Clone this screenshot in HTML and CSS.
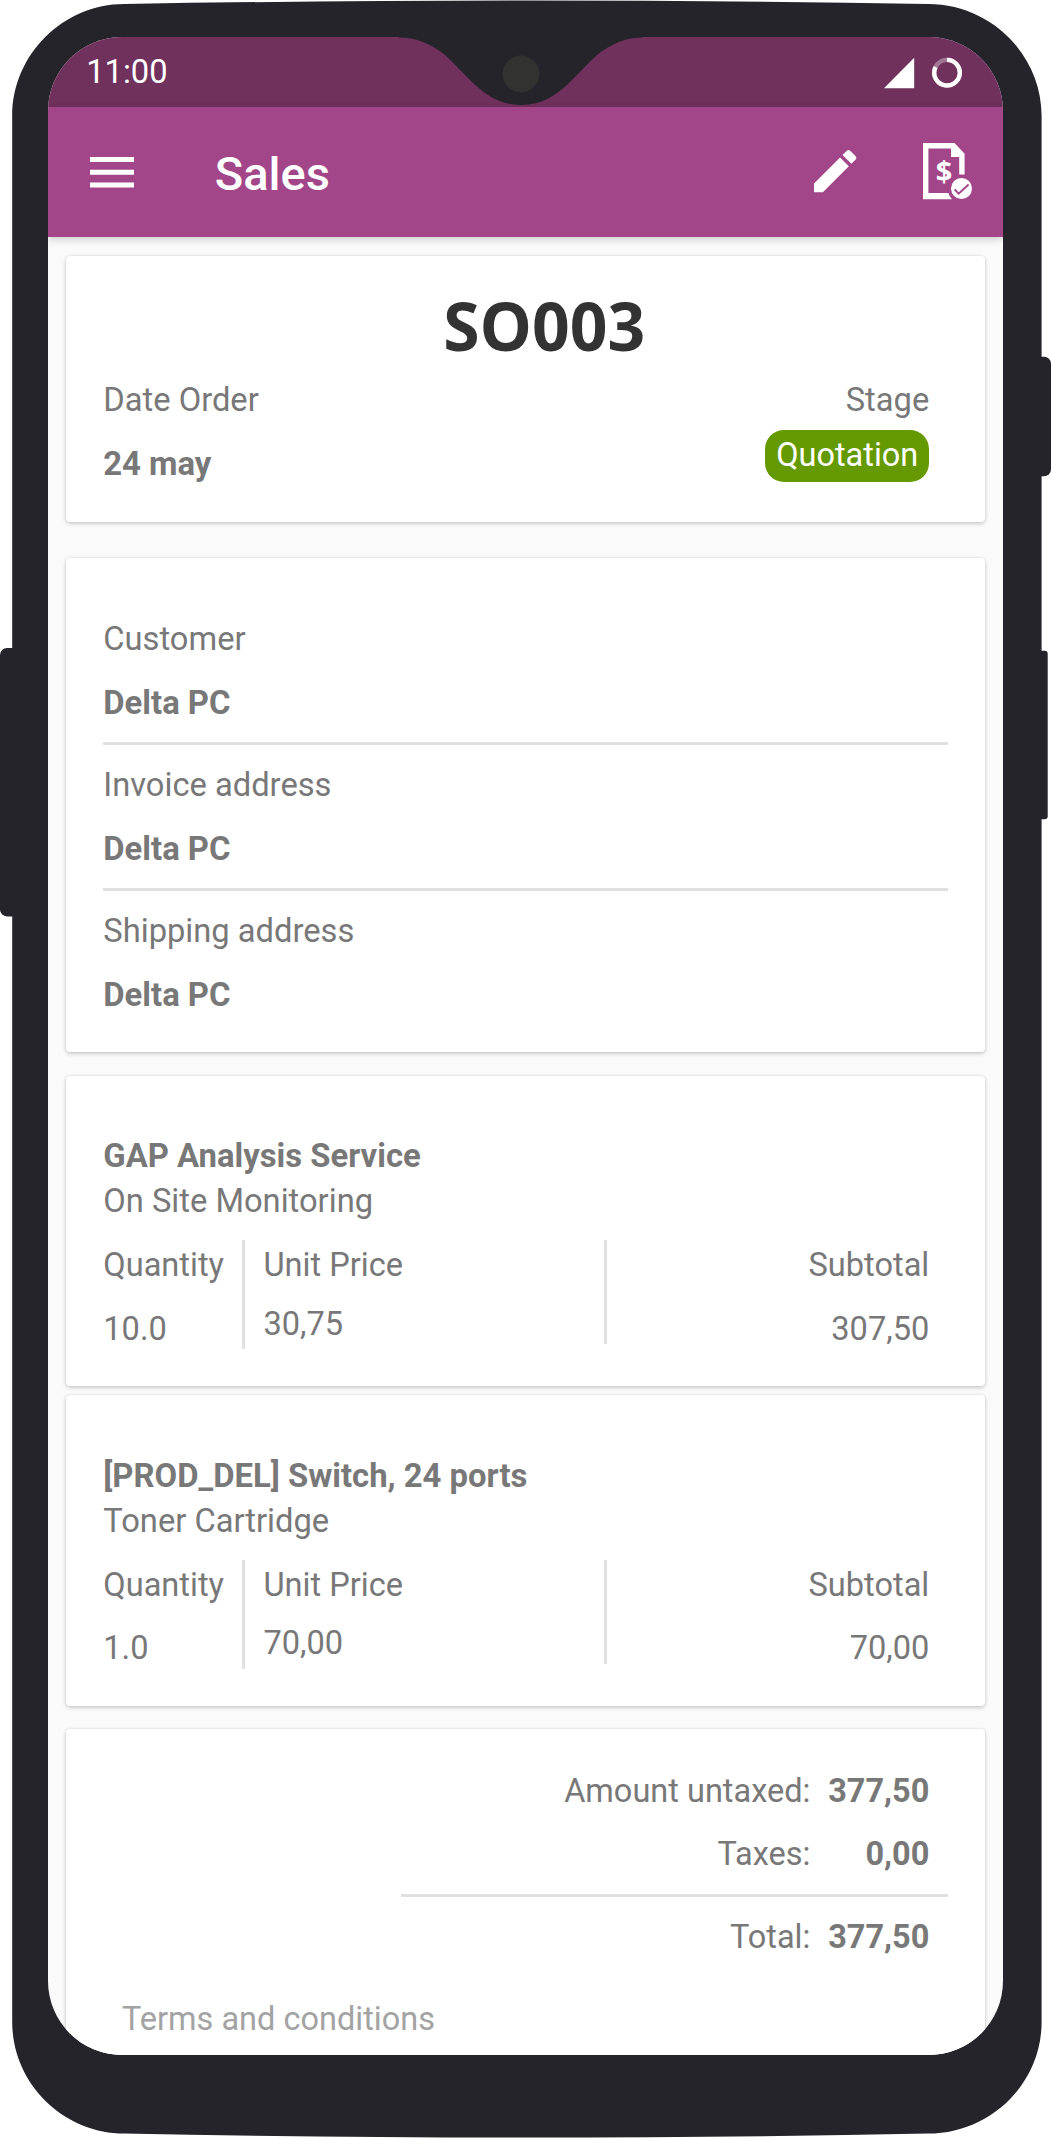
FILE: index.html
```html
<!DOCTYPE html>
<html lang="en">
<head>
<meta charset="utf-8">
<title>Sales</title>
<link rel="stylesheet" href="styles.css">
</head>
<body>
<div class="phone">
  <svg class="phone-shell" viewBox="0 0 1051 2138" aria-hidden="true">
    <rect x="0" y="648" width="30" height="268.4" rx="7"/>
    <rect x="1020" y="356.7" width="31" height="119.6" rx="7"/>
    <rect x="1020" y="650.7" width="27.7" height="168.6" rx="3"/>
    <path d="M12.2 116C12.2 54 64 4 124 4Q320 .6 527 .6Q734 .6 928 4C990 4 1041.6 54 1041.6 116V2022C1041.6 2084 990 2133.4 928 2133.6Q734 2137.6 527 2137.6Q320 2137.6 124 2133.6C64 2133.4 12.2 2084 12.2 2022Z"/>
  </svg>

  <div class="screen">
    <div class="status-bar">
      <span class="clock">11:00</span>
      <svg class="status-icons" viewBox="0 0 80 32" aria-hidden="true">
        <path d="M0 31.2L30.2 .7V31.2Z" fill="#fff"/>
        <circle cx="63" cy="15.7" r="12.8" fill="none" stroke="#fff" stroke-opacity=".35" stroke-width="4.4"/>
        <path d="M63 2.9A12.8 12.8 0 1 1 51.6 9.9" fill="none" stroke="#fff" stroke-width="4.4"/>
      </svg>
    </div>

    <header class="app-bar">
      <svg class="icon-menu" viewBox="0 0 44 31" aria-hidden="true">
        <path d="M0 0H44V5H0ZM0 12.8H44V17.8H0ZM0 25.5H44V30.5H0Z" fill="#fff"/>
      </svg>
      <h1 class="app-title">Sales</h1>
      <svg class="icon-edit" viewBox="0 0 24 24" aria-hidden="true">
        <path d="M3 17.25V21h3.75L17.81 9.94l-3.75-3.75L3 17.25zM20.71 7.04a1 1 0 0 0 0-1.41l-2.34-2.34a1 1 0 0 0-1.41 0l-1.83 1.83 3.75 3.75 1.83-1.83z" fill="#fff"/>
      </svg>
      <svg class="icon-invoice" viewBox="0 0 49 57" aria-hidden="true">
        <path d="M0 0H31.5L41.6 10.8V31.4H36.2V14H28V5.6H5.4V50H25.4Q26.3 53.6 29 56.2H0Z" fill="#fff"/>
        <text class="dollar" x="21" y="39" text-anchor="middle">$</text>
        <circle cx="38.5" cy="45.5" r="10.5" fill="#fff"/>
        <path d="M31.7 46.4L35.6 50.7L45.6 41.5" fill="none" stroke="#a24689" stroke-width="2"/>
      </svg>
    </header>

    <main class="content">
      <section class="card summary">
        <h2 class="order-name">SO003</h2>
        <div class="summary-row">
          <div class="stack">
            <span>Date Order</span>
            <strong>24 may</strong>
          </div>
          <div class="stage">
            <span>Stage</span>
            <span class="badge">Quotation</span>
          </div>
        </div>
      </section>

      <section class="card parties">
        <div class="stack field"><span>Customer</span><strong>Delta PC</strong></div>
        <div class="stack field"><span>Invoice address</span><strong>Delta PC</strong></div>
        <div class="stack field"><span>Shipping address</span><strong>Delta PC</strong></div>
      </section>

      <section class="card line">
        <strong>GAP Analysis Service</strong>
        <span>On Site Monitoring</span>
        <div class="figures">
          <div class="stack qty"><span>Quantity</span><span>10.0</span></div>
          <div class="stack price"><span>Unit Price</span><span>30,75</span></div>
          <div class="stack subtotal"><span>Subtotal</span><span>307,50</span></div>
        </div>
      </section>

      <section class="card line">
        <strong>[PROD_DEL] Switch, 24 ports</strong>
        <span>Toner Cartridge</span>
        <div class="figures">
          <div class="stack qty"><span>Quantity</span><span>1.0</span></div>
          <div class="stack price"><span>Unit Price</span><span>70,00</span></div>
          <div class="stack subtotal"><span>Subtotal</span><span>70,00</span></div>
        </div>
      </section>

      <section class="card totals">
        <div class="sums">
          <div class="sum"><span>Amount untaxed:</span><strong>377,50</strong></div>
          <div class="sum"><span>Taxes:</span><strong>0,00</strong></div>
          <div class="sum grand"><span>Total:</span><strong>377,50</strong></div>
        </div>
        <span class="terms">Terms and conditions</span>
      </section>
    </main>
  </div>

  <svg class="notch" viewBox="0 0 244 70" aria-hidden="true">
    <path d="M0 0V1.5C16 1.5 31 7 46 19C56 28 64 37 74 47C88 60 102 69 122 69C142 69 156 60 170 47C180 37 188 28 198 19C213 7 228 1.5 244 1.5V0Z" fill="#25242a"/>
    <circle cx="122" cy="38" r="18.4" fill="#323231"/>
  </svg>
</div>
</body>
</html>
```
FILE: styles.css
```css
* {
  box-sizing: border-box;
}

body {
  margin: 0;
  background: #fff;
  color: #787878;
  font: 400 32.7px/39px Roboto, "Liberation Sans", sans-serif;
}

strong {
  font-size: 32.84px;
}

.phone {
  position: relative;
  width: 1051px;
  height: 2138px;
  padding: 37px 47.7px 83.3px;
  overflow: hidden;
}

.phone-shell {
  position: absolute;
  inset: 0;
  width: 1051px;
  height: 2138px;
  fill: #25242a;
}

.screen {
  position: relative;
  width: 955.6px;
  height: 2017.7px;
  border-radius: 74px;
  background: #fafafa;
  overflow: hidden;
}

.notch {
  position: absolute;
  left: 398.5px;
  top: 35.5px;
  width: 244px;
  height: 70px;
}

.status-bar {
  display: flex;
  justify-content: space-between;
  align-items: flex-start;
  height: 70px;
  padding: 16px 39px 0 38.5px;
  background: #70315d;
  color: #fff;
}

.status-icons {
  width: 80px;
  height: 32px;
  margin-top: 3.5px;
}

.app-bar {
  position: relative;
  z-index: 1;
  display: flex;
  align-items: flex-start;
  height: 130.4px;
  padding: 0 31px 0 42px;
  background: #a24689;
  color: #fff;
  box-shadow: 0 2px 8px rgba(0, 0, 0, .2);
}

.icon-menu {
  width: 44px;
  height: 31px;
  margin-top: 49.6px;
}

.app-title {
  flex: 1;
  margin: 39px 0 0 81px;
  font-size: 47px;
  line-height: 55px;
  font-weight: 500;
}

.icon-edit {
  width: 56.4px;
  height: 56.4px;
  margin-top: 36.3px;
}

.icon-invoice {
  width: 49px;
  height: 57px;
  margin: 36.3px 0 0 59.6px;
}

.dollar {
  font: 700 29px "Open Sans", sans-serif;
  fill: #fff;
}

.content {
  display: flex;
  flex-direction: column;
  padding: 18.3px 18px 0 18.3px;
}

.card {
  border-radius: 4px;
  background: #fff;
  box-shadow: 0 2px 4px rgba(0, 0, 0, .16), 0 0 3px rgba(0, 0, 0, .12);
}

.stack {
  display: flex;
  flex-direction: column;
  gap: 24.6px;
}

.summary {
  height: 266px;
  padding: 26px 56px 0 37.3px;
}

.order-name {
  margin: 0 0 12.3px;
  padding-left: 56px;
  font: 700 66px/87px "Open Sans", sans-serif;
  color: #333;
  text-align: center;
}

.summary-row {
  display: flex;
  justify-content: space-between;
}

.stage {
  display: flex;
  flex-direction: column;
  align-items: flex-end;
  gap: 9.8px;
}

.badge {
  height: 52.7px;
  padding: 6px 11px 0;
  border-radius: 19px;
  background: #659900;
  color: #fff;
  font-size: 32.5px;
}

.parties {
  height: 494px;
  margin-top: 36.8px;
  padding: 61.8px 37.3px 0 37.3px;
}

.field {
  padding-bottom: 19.4px;
}

.field + .field {
  padding-top: 21px;
  border-top: 3px solid #e0e0e0;
}

.line {
  display: flex;
  flex-direction: column;
  gap: 6px;
  height: 310.6px;
  margin-top: 23.2px;
  padding: 61.4px 56px 0 37.3px;
}

.line + .line {
  margin-top: 9.2px;
}

.figures {
  display: grid;
  grid-template-columns: 141.7px 362px 1fr;
  align-items: start;
  margin-top: 13.2px;
  font-size: 32.6px;
}

.figures .stack {
  padding-top: 5.8px;
}

.qty {
  height: 109px;
  border-right: 3px solid #e0e0e0;
}

.price {
  height: 104px;
  padding-left: 18.5px;
  border-right: 3px solid #e0e0e0;
}

.figures .price {
  gap: 19.6px;
}

.subtotal {
  text-align: right;
}

.totals {
  display: flex;
  flex-direction: column;
  height: 420px;
  margin-top: 23px;
  padding: 42.8px 37.3px 0 56px;
}

.sums {
  display: flex;
  flex-direction: column;
  align-self: flex-end;
  width: 547px;
}

.sum {
  display: grid;
  grid-template-columns: 1fr 119px;
  padding-right: 18.6px;
  margin-bottom: 24.6px;
  font-size: 32.5px;
  text-align: right;
}

.sum strong {
  font-size: 32.5px;
}

.grand {
  margin-top: -4.7px;
  padding-top: 20.6px;
  border-top: 3px solid #e0e0e0;
}

.terms {
  margin-top: 18px;
  color: #a3a3a3;
  font-size: 32.5px;
}
```
